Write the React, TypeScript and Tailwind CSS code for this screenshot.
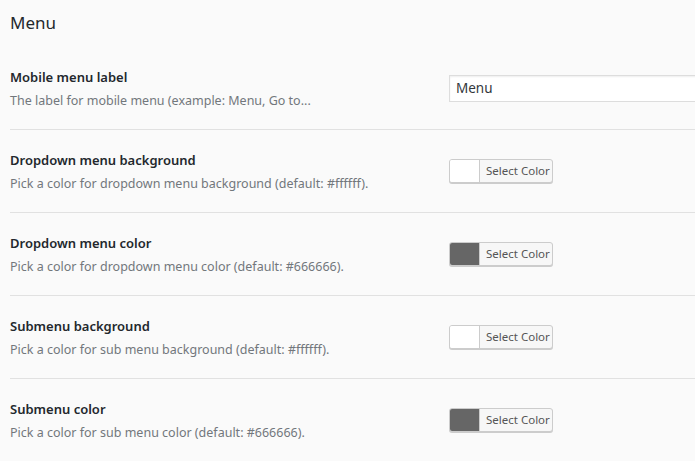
import React from "react";

type Row = {
  label: string;
  desc: string;
  kind: "text" | "color";
  value: string;
};

const rows: Row[] = [
  {
    label: "Mobile menu label",
    desc: "The label for mobile menu (example: Menu, Go to...",
    kind: "text",
    value: "Menu",
  },
  {
    label: "Dropdown menu background",
    desc: "Pick a color for dropdown menu background (default: #ffffff).",
    kind: "color",
    value: "#ffffff",
  },
  {
    label: "Dropdown menu color",
    desc: "Pick a color for dropdown menu color (default: #666666).",
    kind: "color",
    value: "#666666",
  },
  {
    label: "Submenu background",
    desc: "Pick a color for sub menu background (default: #ffffff).",
    kind: "color",
    value: "#ffffff",
  },
  {
    label: "Submenu color",
    desc: "Pick a color for sub menu color (default: #666666).",
    kind: "color",
    value: "#666666",
  },
];

function ColorButton({ value }: { value: string }) {
  return (
    <div className="flex h-6 w-[104px] shrink-0 overflow-hidden rounded-[3px] border border-[#cccccc] bg-[#f7f7f7] shadow-[0_1px_0_#cccccc]">
      {/* swatch colour comes from data */}
      <span className="h-full w-[30px] border-r border-[#cccccc]" style={{ backgroundColor: value }} />
      <span className="whitespace-nowrap pl-[6px] text-[11.5px] leading-[22px] text-[#555555]">Select Color</span>
    </div>
  );
}

export default function App() {
  return (
    <div className="h-[461px] w-[695px] overflow-hidden bg-[#fafafa] pl-[10px] font-['Segoe_UI','Noto_Sans','Open_Sans',sans-serif]">
      <h2 className="h-[47px] pt-[12px] text-[17px] leading-[22px] font-normal text-[#23282d]">Menu</h2>

      {rows.map((row) => (
        <div key={row.label} className="flex h-[83px] items-start border-b border-[#e1e1e1]">
          <div className="w-[439px] shrink-0 pt-[20px]">
            <div className="text-[13px] leading-5 font-semibold text-[#23282d]">{row.label}</div>
            <div className="mt-1 whitespace-nowrap text-[12.5px] leading-5 text-[#72777c]">{row.desc}</div>
          </div>
          {row.kind === "text" ? (
            <div className="mt-[28px] h-[27px] w-[300px] shrink-0 border border-[#dddddd] bg-white pl-[6px] text-[13.5px] leading-[25px] text-[#32373c] shadow-[inset_0_1px_2px_rgba(0,0,0,0.07)]">
              {row.value}
            </div>
          ) : (
            <div className="mt-[29px]">
              <ColorButton value={row.value} />
            </div>
          )}
        </div>
      ))}
    </div>
  );
}
